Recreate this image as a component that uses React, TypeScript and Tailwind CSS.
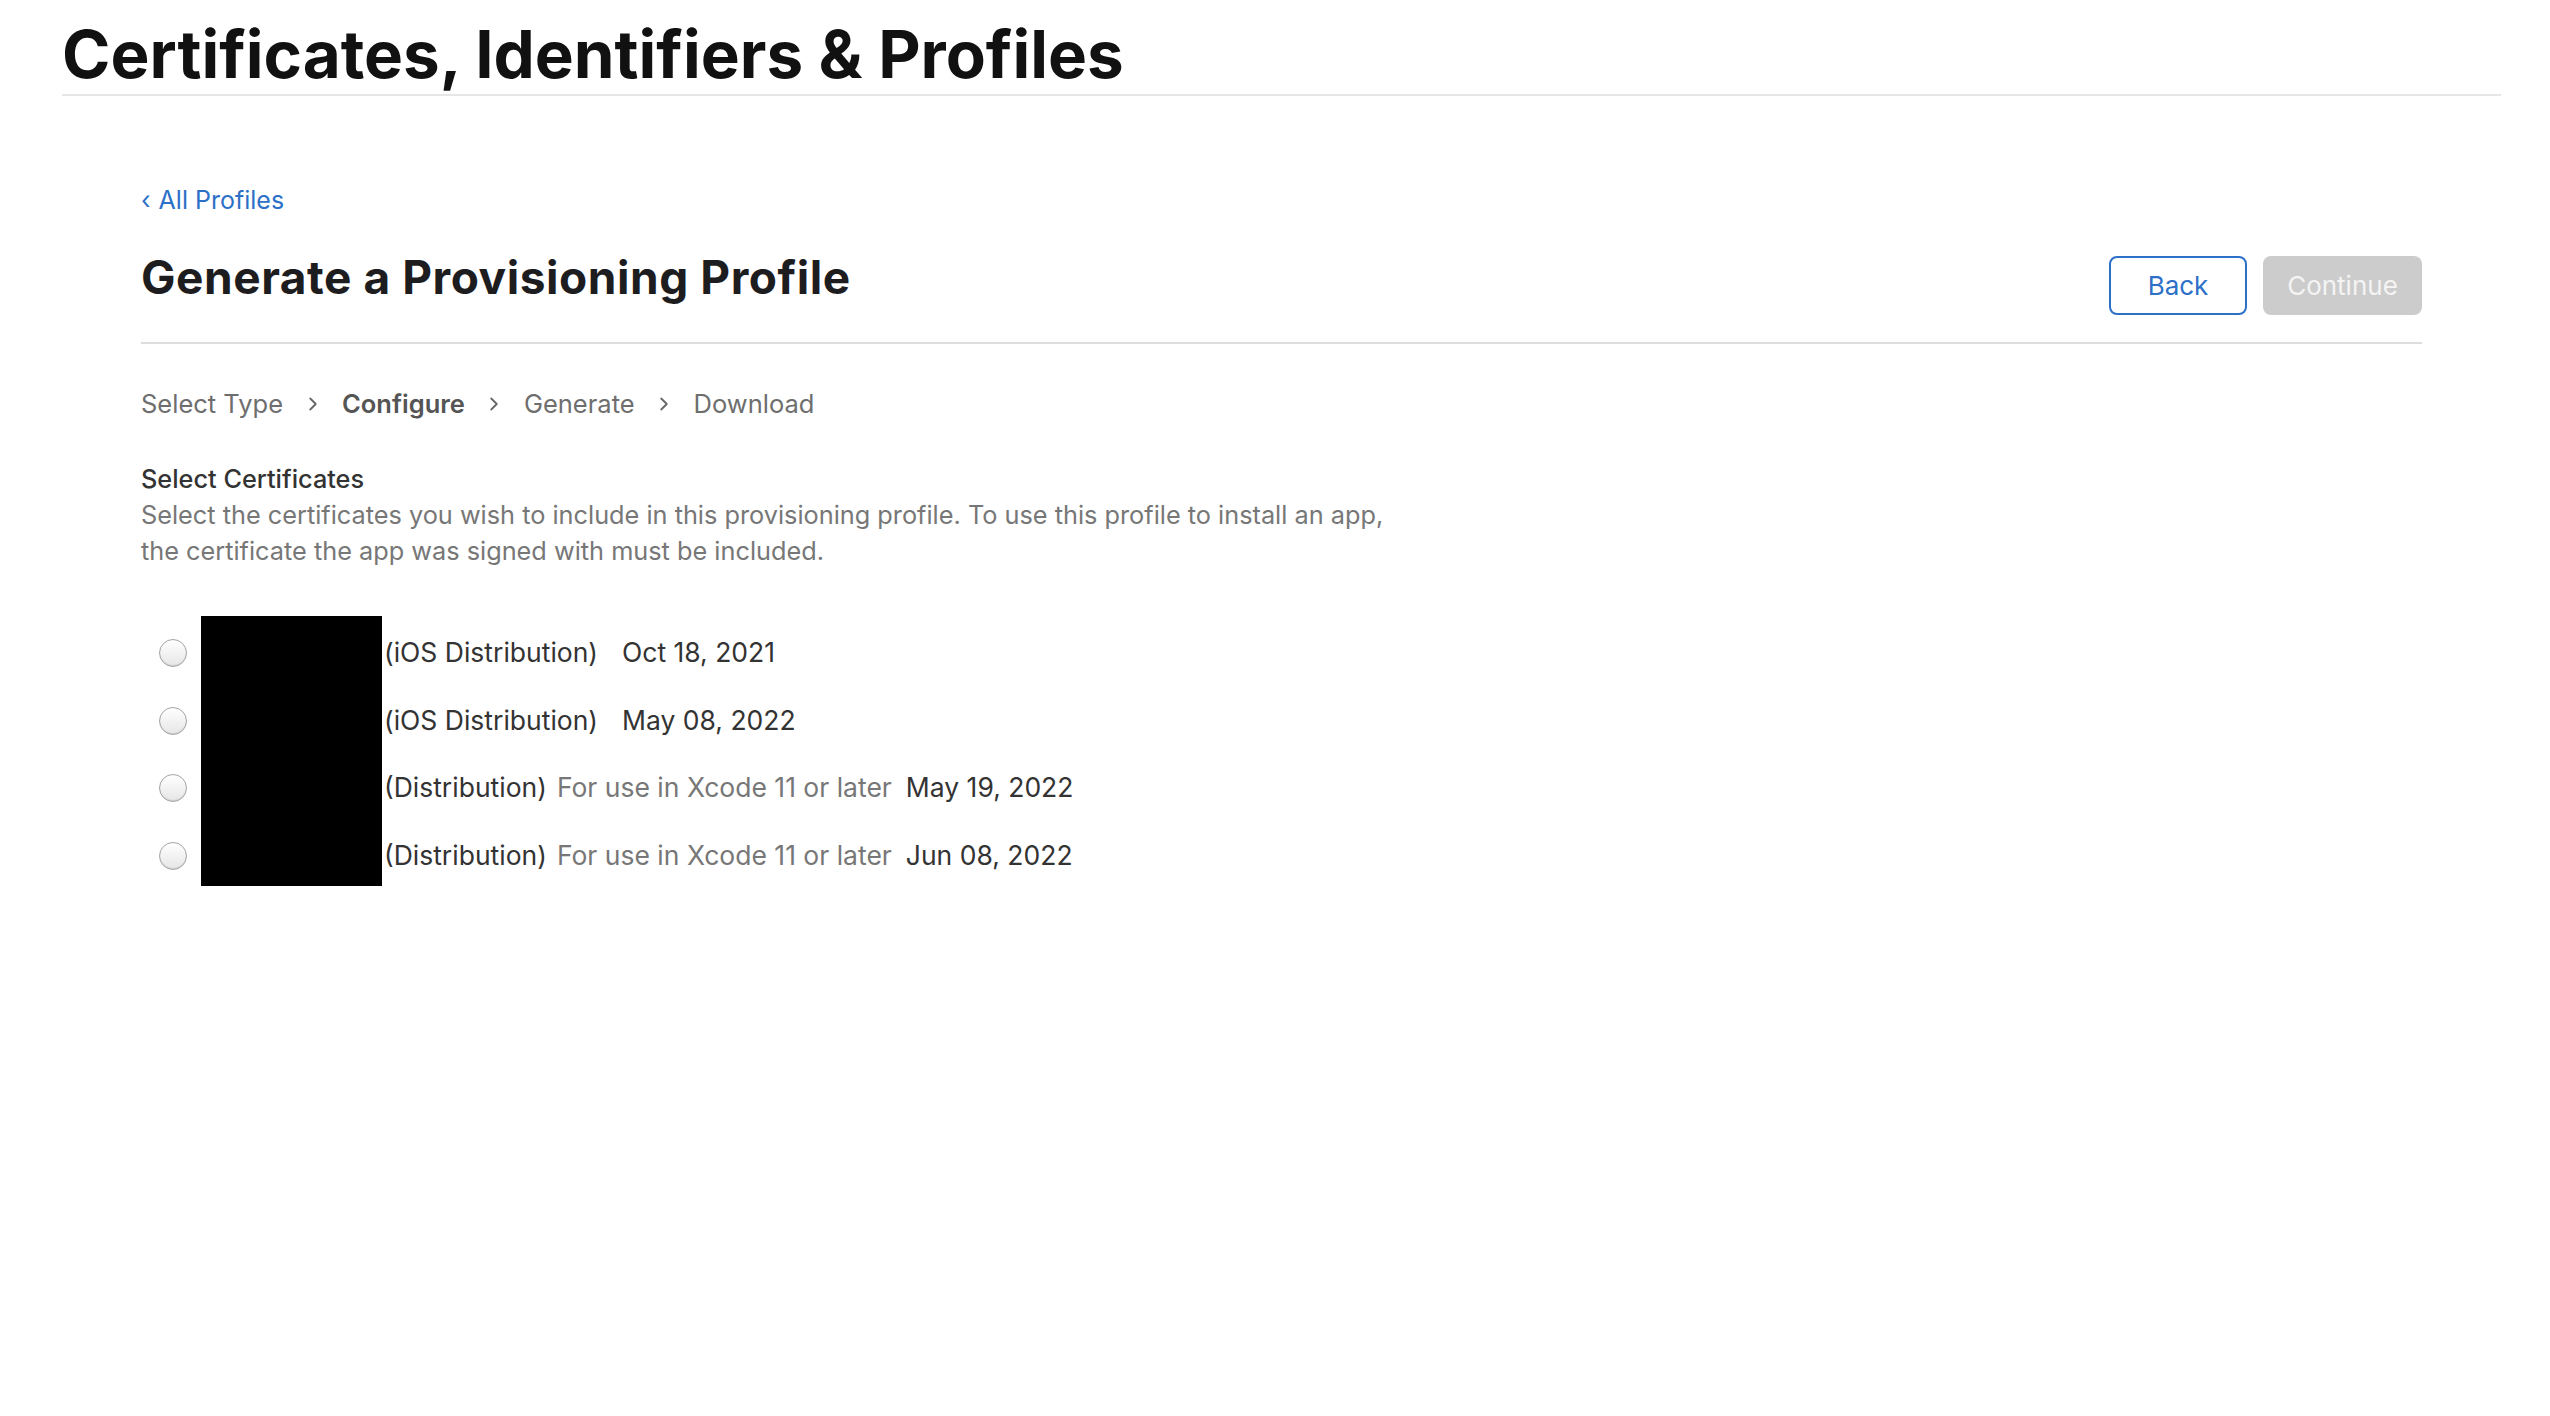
import { ChevronRight } from "lucide-react";

type Cert = {
  type: string;
  note: string;
  date: string;
};

const certs: Cert[] = [
  { type: "(iOS Distribution)", note: "", date: "Oct 18, 2021" },
  { type: "(iOS Distribution)", note: "", date: "May 08, 2022" },
  { type: "(Distribution)", note: "For use in Xcode 11 or later", date: "May 19, 2022" },
  { type: "(Distribution)", note: "For use in Xcode 11 or later", date: "Jun 08, 2022" },
];

const steps = [
  { label: "Select Type", active: false },
  { label: "Configure", active: true },
  { label: "Generate", active: false },
  { label: "Download", active: false },
];

export default function App() {
  return (
    <main className="min-h-screen bg-white font-['Inter',sans-serif] pl-[62px] pr-[49px]">
      {/* Page header */}
      <div className="pt-[22px] pb-[7px] border-b-2 border-[#e6e6e6]">
        <h1 className="text-[65.5px] leading-[65px] font-bold text-[#111]">
          Certificates, Identifiers &amp; Profiles
        </h1>
      </div>

      <div className="px-[79px]">
        {/* Back link */}
        <a
          href="#"
          className="mt-[89px] flex items-center gap-[8px] text-[25px] leading-[30px] text-[#2d70c8]"
        >
          <span>‹</span>
          <span>All Profiles</span>
        </a>

        {/* Heading + actions */}
        <div className="mt-[37px] pb-[27px] flex items-start justify-between border-b-2 border-[#dddddd]">
          <h2 className="text-[46px] leading-[50px] font-bold text-[#1d1d1f] tracking-[0.012em]">
            Generate a Provisioning Profile
          </h2>
          <div className="mt-[4px] flex gap-[16px]">
            <button className="w-[138px] h-[59px] rounded-[8px] border-2 border-[#2d70c8] bg-white text-[26px] text-[#2d70c8]">
              Back
            </button>
            <button
              disabled
              className="w-[159px] h-[59px] rounded-[8px] bg-[#cccccc] text-[26px] text-[#f4f4f4]"
            >
              Continue
            </button>
          </div>
        </div>

        {/* Steps */}
        <div className="mt-[45px] flex items-center text-[25.5px] leading-[30px] text-[#6e6e6e]">
          {steps.map((s, i) => (
            <div key={s.label} className="flex items-center">
              {i > 0 && (
                <ChevronRight className="mx-[18.5px] w-[22px] h-[22px] text-[#666]" strokeWidth={2} />
              )}
              <span className={s.active ? "font-semibold text-[#555]" : ""}>{s.label}</span>
            </div>
          ))}
        </div>

        {/* Select certificates */}
        <div className="mt-[42px] text-[25.3px] leading-[36px]">
          <h3 className="font-medium text-[#333]">Select Certificates</h3>
          <p className="w-[1270px] text-[#777]">
            Select the certificates you wish to include in this provisioning profile. To use this
            profile to install an app, the certificate the app was signed with must be included.
          </p>
        </div>

        {/* Certificate list */}
        <div className="mt-[47px] flex flex-col">
          {certs.map((c, i) => (
            <label key={i} className="h-[67.5px] flex items-stretch text-[26.5px] text-[#333]">
              <span className="mt-[7px] ml-[18px] mr-[14px] self-center w-[28px] h-[28px] rounded-full border border-[#a4a4a4] bg-gradient-to-b from-white to-[#e6e6e6] shadow-[inset_0_-1px_1px_rgba(0,0,0,0.1)]" />
              <span className="w-[181px] bg-black" />
              <span className="mt-[7px] ml-[2px] self-center flex items-center">
                <span>{c.type}</span>
                <span className="ml-[10px] text-[#777]">{c.note}</span>
                <span className="ml-[14px]">{c.date}</span>
              </span>
            </label>
          ))}
        </div>
      </div>
    </main>
  );
}
